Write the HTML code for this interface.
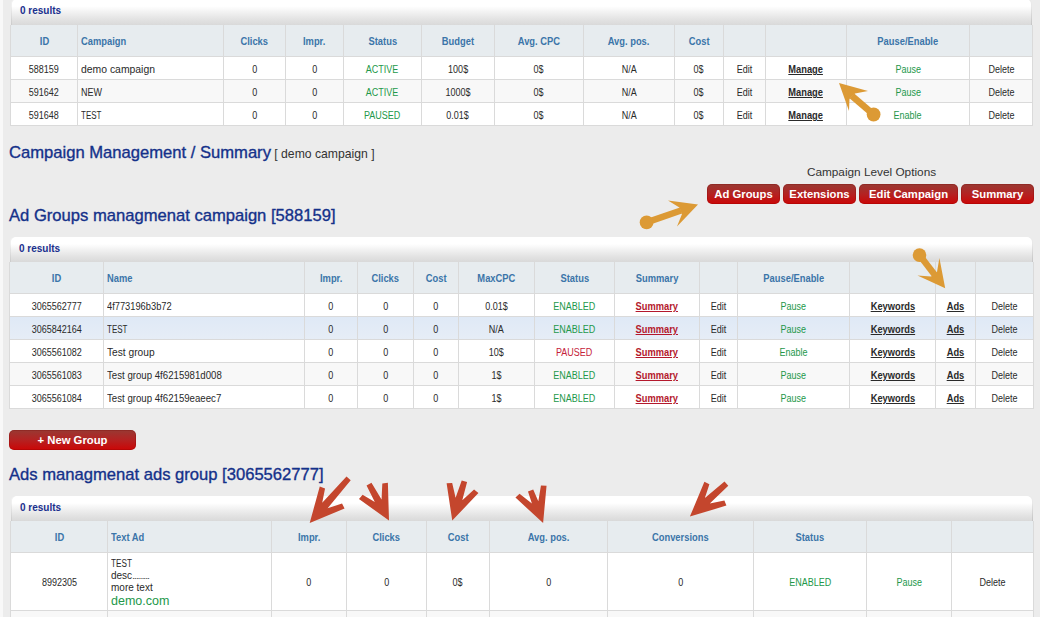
<!DOCTYPE html><html><head><meta charset="utf-8"><style>
html,body{margin:0;padding:0;} body{width:1040px;height:617px;overflow:hidden;position:relative;background:#ececec;font-family:"Liberation Sans", sans-serif;}
.t{position:absolute;white-space:nowrap;overflow:visible;}
.btn{position:absolute;height:20px;line-height:20px;border-radius:5px;color:#fff;font-weight:bold;font-size:11.3px;text-align:center;background:linear-gradient(#983933 0%,#b42222 50%,#cc0606 100%);box-shadow:inset 0 0 0 1px rgba(120,0,0,0.25);}
</style></head><body>
<div style="position:absolute;left:0px;top:0px;width:3px;height:617px;background:#f8f8f8;"></div>
<div style="position:absolute;left:11px;top:-1px;width:1021px;height:26px;background:linear-gradient(#ffffff 0%,#ffffff 28%,#f1f1f1 52%,#e3e3e3 78%,#d9d9d9 100%);border-radius:5px 5px 0 0;box-shadow:inset 1px 0 0 rgba(0,0,0,0.06),inset -1px 0 0 rgba(0,0,0,0.09);"></div>
<div class="t" style="left:20px;top:-2px;width:200px;height:26px;line-height:26px;text-align:left;font-weight:bold;font-size:10px;color:#1a2f8e;">0 results</div>
<div style="position:absolute;left:10px;top:25px;width:1023px;height:101px;background:#dadada;"></div>
<div style="position:absolute;left:11px;top:25px;width:1021px;height:31px;background:#e7ecef;"></div>
<div style="position:absolute;left:11px;top:57px;width:1021px;height:22px;background:#fff;"></div>
<div style="position:absolute;left:11px;top:80px;width:1021px;height:22px;background:#f8f8f8;"></div>
<div style="position:absolute;left:11px;top:103px;width:1021px;height:22px;background:#fff;"></div>
<div style="position:absolute;left:77px;top:25px;width:1px;height:100px;background:#dadada;"></div>
<div style="position:absolute;left:223px;top:25px;width:1px;height:100px;background:#dadada;"></div>
<div style="position:absolute;left:285px;top:25px;width:1px;height:100px;background:#dadada;"></div>
<div style="position:absolute;left:343px;top:25px;width:1px;height:100px;background:#dadada;"></div>
<div style="position:absolute;left:421px;top:25px;width:1px;height:100px;background:#dadada;"></div>
<div style="position:absolute;left:494px;top:25px;width:1px;height:100px;background:#dadada;"></div>
<div style="position:absolute;left:583px;top:25px;width:1px;height:100px;background:#dadada;"></div>
<div style="position:absolute;left:674px;top:25px;width:1px;height:100px;background:#dadada;"></div>
<div style="position:absolute;left:723px;top:25px;width:1px;height:100px;background:#dadada;"></div>
<div style="position:absolute;left:765px;top:25px;width:1px;height:100px;background:#dadada;"></div>
<div style="position:absolute;left:846px;top:25px;width:1px;height:100px;background:#dadada;"></div>
<div style="position:absolute;left:969px;top:25px;width:1px;height:100px;background:#dadada;"></div>
<div class="t" style="left:11px;top:26px;width:66px;height:31px;line-height:31px;text-align:center;font-weight:bold;font-size:11px;color:#3b75a9;"><span style="display:inline-block;transform:scaleX(0.85);transform-origin:center;">ID</span></div>
<div class="t" style="left:81px;top:26px;width:142px;height:31px;line-height:31px;text-align:left;font-weight:bold;font-size:11px;color:#3b75a9;"><span style="display:inline-block;transform:scaleX(0.85);transform-origin:left;">Campaign</span></div>
<div class="t" style="left:224px;top:26px;width:61px;height:31px;line-height:31px;text-align:center;font-weight:bold;font-size:11px;color:#3b75a9;"><span style="display:inline-block;transform:scaleX(0.85);transform-origin:center;">Clicks</span></div>
<div class="t" style="left:286px;top:26px;width:57px;height:31px;line-height:31px;text-align:center;font-weight:bold;font-size:11px;color:#3b75a9;"><span style="display:inline-block;transform:scaleX(0.85);transform-origin:center;">Impr.</span></div>
<div class="t" style="left:344px;top:26px;width:77px;height:31px;line-height:31px;text-align:center;font-weight:bold;font-size:11px;color:#3b75a9;"><span style="display:inline-block;transform:scaleX(0.85);transform-origin:center;">Status</span></div>
<div class="t" style="left:422px;top:26px;width:72px;height:31px;line-height:31px;text-align:center;font-weight:bold;font-size:11px;color:#3b75a9;"><span style="display:inline-block;transform:scaleX(0.85);transform-origin:center;">Budget</span></div>
<div class="t" style="left:495px;top:26px;width:88px;height:31px;line-height:31px;text-align:center;font-weight:bold;font-size:11px;color:#3b75a9;"><span style="display:inline-block;transform:scaleX(0.85);transform-origin:center;">Avg. CPC</span></div>
<div class="t" style="left:584px;top:26px;width:90px;height:31px;line-height:31px;text-align:center;font-weight:bold;font-size:11px;color:#3b75a9;"><span style="display:inline-block;transform:scaleX(0.85);transform-origin:center;">Avg. pos.</span></div>
<div class="t" style="left:675px;top:26px;width:48px;height:31px;line-height:31px;text-align:center;font-weight:bold;font-size:11px;color:#3b75a9;"><span style="display:inline-block;transform:scaleX(0.85);transform-origin:center;">Cost</span></div>
<div class="t" style="left:847px;top:26px;width:122px;height:31px;line-height:31px;text-align:center;font-weight:bold;font-size:11px;color:#3b75a9;"><span style="display:inline-block;transform:scaleX(0.85);transform-origin:center;">Pause/Enable</span></div>
<div class="t" style="left:11px;top:59px;width:66px;height:22px;line-height:22px;text-align:center;font-size:10px;color:#2a2a2a;"><span style="display:inline-block;transform:scaleX(0.9);transform-origin:center;">588159</span></div>
<div class="t" style="left:81px;top:59px;width:142px;height:22px;line-height:22px;text-align:left;font-size:10px;color:#2a2a2a;/*sx=1.04*/"><span style="display:inline-block;transform:scaleX(1.04);transform-origin:left;">demo campaign</span></div>
<div class="t" style="left:224px;top:59px;width:61px;height:22px;line-height:22px;text-align:center;font-size:10px;color:#2a2a2a;"><span style="display:inline-block;transform:scaleX(0.9);transform-origin:center;">0</span></div>
<div class="t" style="left:286px;top:59px;width:57px;height:22px;line-height:22px;text-align:center;font-size:10px;color:#2a2a2a;"><span style="display:inline-block;transform:scaleX(0.9);transform-origin:center;">0</span></div>
<div class="t" style="left:344px;top:59px;width:77px;height:22px;line-height:22px;text-align:center;font-size:10px;color:#2a2a2a;color:#23984a;"><span style="display:inline-block;transform:scaleX(0.9);transform-origin:center;">ACTIVE</span></div>
<div class="t" style="left:422px;top:59px;width:72px;height:22px;line-height:22px;text-align:center;font-size:10px;color:#2a2a2a;"><span style="display:inline-block;transform:scaleX(0.9);transform-origin:center;">100$</span></div>
<div class="t" style="left:495px;top:59px;width:88px;height:22px;line-height:22px;text-align:center;font-size:10px;color:#2a2a2a;"><span style="display:inline-block;transform:scaleX(0.9);transform-origin:center;">0$</span></div>
<div class="t" style="left:584px;top:59px;width:90px;height:22px;line-height:22px;text-align:center;font-size:10px;color:#2a2a2a;"><span style="display:inline-block;transform:scaleX(0.9);transform-origin:center;">N/A</span></div>
<div class="t" style="left:675px;top:59px;width:48px;height:22px;line-height:22px;text-align:center;font-size:10px;color:#2a2a2a;"><span style="display:inline-block;transform:scaleX(0.9);transform-origin:center;">0$</span></div>
<div class="t" style="left:724px;top:59px;width:41px;height:22px;line-height:22px;text-align:center;font-size:10px;color:#2a2a2a;"><span style="display:inline-block;transform:scaleX(0.9);transform-origin:center;">Edit</span></div>
<div class="t" style="left:766px;top:59px;width:80px;height:22px;line-height:22px;text-align:center;font-size:10px;color:#2a2a2a;font-weight:bold;text-decoration:underline;font-size:10px;"><span style="display:inline-block;transform:scaleX(0.93);transform-origin:center;text-decoration:underline;">Manage</span></div>
<div class="t" style="left:847px;top:59px;width:122px;height:22px;line-height:22px;text-align:center;font-size:10px;color:#2a2a2a;color:#23984a;"><span style="display:inline-block;transform:scaleX(0.9);transform-origin:center;">Pause</span></div>
<div class="t" style="left:970px;top:59px;width:62px;height:22px;line-height:22px;text-align:center;font-size:10px;color:#2a2a2a;"><span style="display:inline-block;transform:scaleX(0.9);transform-origin:center;">Delete</span></div>
<div class="t" style="left:11px;top:82px;width:66px;height:22px;line-height:22px;text-align:center;font-size:10px;color:#2a2a2a;"><span style="display:inline-block;transform:scaleX(0.9);transform-origin:center;">591642</span></div>
<div class="t" style="left:81px;top:82px;width:142px;height:22px;line-height:22px;text-align:left;font-size:10px;color:#2a2a2a;/*sx=0.9*/"><span style="display:inline-block;transform:scaleX(0.9);transform-origin:left;">NEW</span></div>
<div class="t" style="left:224px;top:82px;width:61px;height:22px;line-height:22px;text-align:center;font-size:10px;color:#2a2a2a;"><span style="display:inline-block;transform:scaleX(0.9);transform-origin:center;">0</span></div>
<div class="t" style="left:286px;top:82px;width:57px;height:22px;line-height:22px;text-align:center;font-size:10px;color:#2a2a2a;"><span style="display:inline-block;transform:scaleX(0.9);transform-origin:center;">0</span></div>
<div class="t" style="left:344px;top:82px;width:77px;height:22px;line-height:22px;text-align:center;font-size:10px;color:#2a2a2a;color:#23984a;"><span style="display:inline-block;transform:scaleX(0.9);transform-origin:center;">ACTIVE</span></div>
<div class="t" style="left:422px;top:82px;width:72px;height:22px;line-height:22px;text-align:center;font-size:10px;color:#2a2a2a;"><span style="display:inline-block;transform:scaleX(0.9);transform-origin:center;">1000$</span></div>
<div class="t" style="left:495px;top:82px;width:88px;height:22px;line-height:22px;text-align:center;font-size:10px;color:#2a2a2a;"><span style="display:inline-block;transform:scaleX(0.9);transform-origin:center;">0$</span></div>
<div class="t" style="left:584px;top:82px;width:90px;height:22px;line-height:22px;text-align:center;font-size:10px;color:#2a2a2a;"><span style="display:inline-block;transform:scaleX(0.9);transform-origin:center;">N/A</span></div>
<div class="t" style="left:675px;top:82px;width:48px;height:22px;line-height:22px;text-align:center;font-size:10px;color:#2a2a2a;"><span style="display:inline-block;transform:scaleX(0.9);transform-origin:center;">0$</span></div>
<div class="t" style="left:724px;top:82px;width:41px;height:22px;line-height:22px;text-align:center;font-size:10px;color:#2a2a2a;"><span style="display:inline-block;transform:scaleX(0.9);transform-origin:center;">Edit</span></div>
<div class="t" style="left:766px;top:82px;width:80px;height:22px;line-height:22px;text-align:center;font-size:10px;color:#2a2a2a;font-weight:bold;text-decoration:underline;font-size:10px;"><span style="display:inline-block;transform:scaleX(0.93);transform-origin:center;text-decoration:underline;">Manage</span></div>
<div class="t" style="left:847px;top:82px;width:122px;height:22px;line-height:22px;text-align:center;font-size:10px;color:#2a2a2a;color:#23984a;"><span style="display:inline-block;transform:scaleX(0.9);transform-origin:center;">Pause</span></div>
<div class="t" style="left:970px;top:82px;width:62px;height:22px;line-height:22px;text-align:center;font-size:10px;color:#2a2a2a;"><span style="display:inline-block;transform:scaleX(0.9);transform-origin:center;">Delete</span></div>
<div class="t" style="left:11px;top:105px;width:66px;height:22px;line-height:22px;text-align:center;font-size:10px;color:#2a2a2a;"><span style="display:inline-block;transform:scaleX(0.9);transform-origin:center;">591648</span></div>
<div class="t" style="left:81px;top:105px;width:142px;height:22px;line-height:22px;text-align:left;font-size:10px;color:#2a2a2a;/*sx=0.8*/"><span style="display:inline-block;transform:scaleX(0.8);transform-origin:left;">TEST</span></div>
<div class="t" style="left:224px;top:105px;width:61px;height:22px;line-height:22px;text-align:center;font-size:10px;color:#2a2a2a;"><span style="display:inline-block;transform:scaleX(0.9);transform-origin:center;">0</span></div>
<div class="t" style="left:286px;top:105px;width:57px;height:22px;line-height:22px;text-align:center;font-size:10px;color:#2a2a2a;"><span style="display:inline-block;transform:scaleX(0.9);transform-origin:center;">0</span></div>
<div class="t" style="left:344px;top:105px;width:77px;height:22px;line-height:22px;text-align:center;font-size:10px;color:#2a2a2a;color:#23984a;"><span style="display:inline-block;transform:scaleX(0.9);transform-origin:center;">PAUSED</span></div>
<div class="t" style="left:422px;top:105px;width:72px;height:22px;line-height:22px;text-align:center;font-size:10px;color:#2a2a2a;"><span style="display:inline-block;transform:scaleX(0.9);transform-origin:center;">0.01$</span></div>
<div class="t" style="left:495px;top:105px;width:88px;height:22px;line-height:22px;text-align:center;font-size:10px;color:#2a2a2a;"><span style="display:inline-block;transform:scaleX(0.9);transform-origin:center;">0$</span></div>
<div class="t" style="left:584px;top:105px;width:90px;height:22px;line-height:22px;text-align:center;font-size:10px;color:#2a2a2a;"><span style="display:inline-block;transform:scaleX(0.9);transform-origin:center;">N/A</span></div>
<div class="t" style="left:675px;top:105px;width:48px;height:22px;line-height:22px;text-align:center;font-size:10px;color:#2a2a2a;"><span style="display:inline-block;transform:scaleX(0.9);transform-origin:center;">0$</span></div>
<div class="t" style="left:724px;top:105px;width:41px;height:22px;line-height:22px;text-align:center;font-size:10px;color:#2a2a2a;"><span style="display:inline-block;transform:scaleX(0.9);transform-origin:center;">Edit</span></div>
<div class="t" style="left:766px;top:105px;width:80px;height:22px;line-height:22px;text-align:center;font-size:10px;color:#2a2a2a;font-weight:bold;text-decoration:underline;font-size:10px;"><span style="display:inline-block;transform:scaleX(0.93);transform-origin:center;text-decoration:underline;">Manage</span></div>
<div class="t" style="left:847px;top:105px;width:122px;height:22px;line-height:22px;text-align:center;font-size:10px;color:#2a2a2a;color:#23984a;"><span style="display:inline-block;transform:scaleX(0.9);transform-origin:center;">Enable</span></div>
<div class="t" style="left:970px;top:105px;width:62px;height:22px;line-height:22px;text-align:center;font-size:10px;color:#2a2a2a;"><span style="display:inline-block;transform:scaleX(0.9);transform-origin:center;">Delete</span></div>
<div class="t" style="left:9px;top:143px;width:400px;height:20px;line-height:20px;text-align:left;"><span style="font-size:16.6px;color:#14318a;-webkit-text-stroke:0.35px #14318a;">Campaign Management / Summary</span><span style="font-size:12.2px;color:#333;"> [ demo campaign ]</span></div>
<div class="t" style="left:760px;top:164px;width:223px;height:16px;line-height:16px;text-align:center;font-size:11.8px;color:#333;">Campaign Level Options</div>
<div class="btn" style="left:707px;top:184px;width:73px;">Ad Groups</div>
<div class="btn" style="left:783px;top:184px;width:73px;">Extensions</div>
<div class="btn" style="left:859px;top:184px;width:99px;">Edit Campaign</div>
<div class="btn" style="left:961px;top:184px;width:73px;">Summary</div>
<div class="t" style="left:9px;top:206px;width:400px;height:20px;line-height:20px;text-align:left;font-size:16.6px;color:#14318a;-webkit-text-stroke:0.35px #14318a;">Ad Groups managmenat campaign [588159]</div>
<div style="position:absolute;left:10px;top:237px;width:1023px;height:25px;background:linear-gradient(#ffffff 0%,#ffffff 28%,#f1f1f1 52%,#e3e3e3 78%,#d9d9d9 100%);border-radius:5px 5px 0 0;box-shadow:inset 1px 0 0 rgba(0,0,0,0.06),inset -1px 0 0 rgba(0,0,0,0.09);"></div>
<div class="t" style="left:19px;top:236px;width:200px;height:25px;line-height:25px;text-align:left;font-weight:bold;font-size:10px;color:#1a2f8e;">0 results</div>
<div style="position:absolute;left:9px;top:262px;width:1025px;height:147px;background:#dadada;"></div>
<div style="position:absolute;left:10px;top:262px;width:1023px;height:31px;background:#e7ecef;"></div>
<div style="position:absolute;left:10px;top:294px;width:1023px;height:22px;background:#fff;"></div>
<div style="position:absolute;left:10px;top:317px;width:1023px;height:22px;background:linear-gradient(#dfe9f6,#e6edf6);"></div>
<div style="position:absolute;left:10px;top:340px;width:1023px;height:22px;background:#fff;"></div>
<div style="position:absolute;left:10px;top:363px;width:1023px;height:22px;background:#f8f8f8;"></div>
<div style="position:absolute;left:10px;top:386px;width:1023px;height:22px;background:#fff;"></div>
<div style="position:absolute;left:103px;top:262px;width:1px;height:146px;background:#dadada;"></div>
<div style="position:absolute;left:304px;top:262px;width:1px;height:146px;background:#dadada;"></div>
<div style="position:absolute;left:357px;top:262px;width:1px;height:146px;background:#dadada;"></div>
<div style="position:absolute;left:413px;top:262px;width:1px;height:146px;background:#dadada;"></div>
<div style="position:absolute;left:458px;top:262px;width:1px;height:146px;background:#dadada;"></div>
<div style="position:absolute;left:534px;top:262px;width:1px;height:146px;background:#dadada;"></div>
<div style="position:absolute;left:614px;top:262px;width:1px;height:146px;background:#dadada;"></div>
<div style="position:absolute;left:699px;top:262px;width:1px;height:146px;background:#dadada;"></div>
<div style="position:absolute;left:737px;top:262px;width:1px;height:146px;background:#dadada;"></div>
<div style="position:absolute;left:849px;top:262px;width:1px;height:146px;background:#dadada;"></div>
<div style="position:absolute;left:935px;top:262px;width:1px;height:146px;background:#dadada;"></div>
<div style="position:absolute;left:975px;top:262px;width:1px;height:146px;background:#dadada;"></div>
<div class="t" style="left:10px;top:263px;width:93px;height:31px;line-height:31px;text-align:center;font-weight:bold;font-size:11px;color:#3b75a9;"><span style="display:inline-block;transform:scaleX(0.85);transform-origin:center;">ID</span></div>
<div class="t" style="left:107px;top:263px;width:197px;height:31px;line-height:31px;text-align:left;font-weight:bold;font-size:11px;color:#3b75a9;"><span style="display:inline-block;transform:scaleX(0.85);transform-origin:left;">Name</span></div>
<div class="t" style="left:305px;top:263px;width:52px;height:31px;line-height:31px;text-align:center;font-weight:bold;font-size:11px;color:#3b75a9;"><span style="display:inline-block;transform:scaleX(0.85);transform-origin:center;">Impr.</span></div>
<div class="t" style="left:358px;top:263px;width:55px;height:31px;line-height:31px;text-align:center;font-weight:bold;font-size:11px;color:#3b75a9;"><span style="display:inline-block;transform:scaleX(0.85);transform-origin:center;">Clicks</span></div>
<div class="t" style="left:414px;top:263px;width:44px;height:31px;line-height:31px;text-align:center;font-weight:bold;font-size:11px;color:#3b75a9;"><span style="display:inline-block;transform:scaleX(0.85);transform-origin:center;">Cost</span></div>
<div class="t" style="left:459px;top:263px;width:75px;height:31px;line-height:31px;text-align:center;font-weight:bold;font-size:11px;color:#3b75a9;"><span style="display:inline-block;transform:scaleX(0.85);transform-origin:center;">MaxCPC</span></div>
<div class="t" style="left:535px;top:263px;width:79px;height:31px;line-height:31px;text-align:center;font-weight:bold;font-size:11px;color:#3b75a9;"><span style="display:inline-block;transform:scaleX(0.85);transform-origin:center;">Status</span></div>
<div class="t" style="left:615px;top:263px;width:84px;height:31px;line-height:31px;text-align:center;font-weight:bold;font-size:11px;color:#3b75a9;"><span style="display:inline-block;transform:scaleX(0.85);transform-origin:center;">Summary</span></div>
<div class="t" style="left:738px;top:263px;width:111px;height:31px;line-height:31px;text-align:center;font-weight:bold;font-size:11px;color:#3b75a9;"><span style="display:inline-block;transform:scaleX(0.85);transform-origin:center;">Pause/Enable</span></div>
<div class="t" style="left:10px;top:296px;width:93px;height:22px;line-height:22px;text-align:center;font-size:10px;color:#2a2a2a;"><span style="display:inline-block;transform:scaleX(0.9);transform-origin:center;">3065562777</span></div>
<div class="t" style="left:107px;top:296px;width:197px;height:22px;line-height:22px;text-align:left;font-size:10px;color:#2a2a2a;/*sx=0.93*/"><span style="display:inline-block;transform:scaleX(0.93);transform-origin:left;">4f773196b3b72</span></div>
<div class="t" style="left:305px;top:296px;width:52px;height:22px;line-height:22px;text-align:center;font-size:10px;color:#2a2a2a;"><span style="display:inline-block;transform:scaleX(0.9);transform-origin:center;">0</span></div>
<div class="t" style="left:358px;top:296px;width:55px;height:22px;line-height:22px;text-align:center;font-size:10px;color:#2a2a2a;"><span style="display:inline-block;transform:scaleX(0.9);transform-origin:center;">0</span></div>
<div class="t" style="left:414px;top:296px;width:44px;height:22px;line-height:22px;text-align:center;font-size:10px;color:#2a2a2a;"><span style="display:inline-block;transform:scaleX(0.9);transform-origin:center;">0</span></div>
<div class="t" style="left:459px;top:296px;width:75px;height:22px;line-height:22px;text-align:center;font-size:10px;color:#2a2a2a;"><span style="display:inline-block;transform:scaleX(0.9);transform-origin:center;">0.01$</span></div>
<div class="t" style="left:535px;top:296px;width:79px;height:22px;line-height:22px;text-align:center;font-size:10px;color:#2a2a2a;color:#23984a;"><span style="display:inline-block;transform:scaleX(0.9);transform-origin:center;">ENABLED</span></div>
<div class="t" style="left:615px;top:296px;width:84px;height:22px;line-height:22px;text-align:center;font-size:10px;color:#2a2a2a;font-weight:bold;text-decoration:underline;font-size:10px;color:#b4182c;"><span style="display:inline-block;transform:scaleX(0.93);transform-origin:center;text-decoration:underline;">Summary</span></div>
<div class="t" style="left:700px;top:296px;width:37px;height:22px;line-height:22px;text-align:center;font-size:10px;color:#2a2a2a;"><span style="display:inline-block;transform:scaleX(0.9);transform-origin:center;">Edit</span></div>
<div class="t" style="left:738px;top:296px;width:111px;height:22px;line-height:22px;text-align:center;font-size:10px;color:#2a2a2a;color:#23984a;"><span style="display:inline-block;transform:scaleX(0.9);transform-origin:center;">Pause</span></div>
<div class="t" style="left:850px;top:296px;width:85px;height:22px;line-height:22px;text-align:center;font-size:10px;color:#2a2a2a;font-weight:bold;text-decoration:underline;font-size:10px;"><span style="display:inline-block;transform:scaleX(0.93);transform-origin:center;text-decoration:underline;">Keywords</span></div>
<div class="t" style="left:936px;top:296px;width:39px;height:22px;line-height:22px;text-align:center;font-size:10px;color:#2a2a2a;font-weight:bold;text-decoration:underline;font-size:10px;"><span style="display:inline-block;transform:scaleX(0.93);transform-origin:center;text-decoration:underline;">Ads</span></div>
<div class="t" style="left:976px;top:296px;width:57px;height:22px;line-height:22px;text-align:center;font-size:10px;color:#2a2a2a;"><span style="display:inline-block;transform:scaleX(0.9);transform-origin:center;">Delete</span></div>
<div class="t" style="left:10px;top:319px;width:93px;height:22px;line-height:22px;text-align:center;font-size:10px;color:#2a2a2a;"><span style="display:inline-block;transform:scaleX(0.9);transform-origin:center;">3065842164</span></div>
<div class="t" style="left:107px;top:319px;width:197px;height:22px;line-height:22px;text-align:left;font-size:10px;color:#2a2a2a;/*sx=0.8*/"><span style="display:inline-block;transform:scaleX(0.8);transform-origin:left;">TEST</span></div>
<div class="t" style="left:305px;top:319px;width:52px;height:22px;line-height:22px;text-align:center;font-size:10px;color:#2a2a2a;"><span style="display:inline-block;transform:scaleX(0.9);transform-origin:center;">0</span></div>
<div class="t" style="left:358px;top:319px;width:55px;height:22px;line-height:22px;text-align:center;font-size:10px;color:#2a2a2a;"><span style="display:inline-block;transform:scaleX(0.9);transform-origin:center;">0</span></div>
<div class="t" style="left:414px;top:319px;width:44px;height:22px;line-height:22px;text-align:center;font-size:10px;color:#2a2a2a;"><span style="display:inline-block;transform:scaleX(0.9);transform-origin:center;">0</span></div>
<div class="t" style="left:459px;top:319px;width:75px;height:22px;line-height:22px;text-align:center;font-size:10px;color:#2a2a2a;"><span style="display:inline-block;transform:scaleX(0.9);transform-origin:center;">N/A</span></div>
<div class="t" style="left:535px;top:319px;width:79px;height:22px;line-height:22px;text-align:center;font-size:10px;color:#2a2a2a;color:#23984a;"><span style="display:inline-block;transform:scaleX(0.9);transform-origin:center;">ENABLED</span></div>
<div class="t" style="left:615px;top:319px;width:84px;height:22px;line-height:22px;text-align:center;font-size:10px;color:#2a2a2a;font-weight:bold;text-decoration:underline;font-size:10px;color:#b4182c;"><span style="display:inline-block;transform:scaleX(0.93);transform-origin:center;text-decoration:underline;">Summary</span></div>
<div class="t" style="left:700px;top:319px;width:37px;height:22px;line-height:22px;text-align:center;font-size:10px;color:#2a2a2a;"><span style="display:inline-block;transform:scaleX(0.9);transform-origin:center;">Edit</span></div>
<div class="t" style="left:738px;top:319px;width:111px;height:22px;line-height:22px;text-align:center;font-size:10px;color:#2a2a2a;color:#23984a;"><span style="display:inline-block;transform:scaleX(0.9);transform-origin:center;">Pause</span></div>
<div class="t" style="left:850px;top:319px;width:85px;height:22px;line-height:22px;text-align:center;font-size:10px;color:#2a2a2a;font-weight:bold;text-decoration:underline;font-size:10px;"><span style="display:inline-block;transform:scaleX(0.93);transform-origin:center;text-decoration:underline;">Keywords</span></div>
<div class="t" style="left:936px;top:319px;width:39px;height:22px;line-height:22px;text-align:center;font-size:10px;color:#2a2a2a;font-weight:bold;text-decoration:underline;font-size:10px;"><span style="display:inline-block;transform:scaleX(0.93);transform-origin:center;text-decoration:underline;">Ads</span></div>
<div class="t" style="left:976px;top:319px;width:57px;height:22px;line-height:22px;text-align:center;font-size:10px;color:#2a2a2a;"><span style="display:inline-block;transform:scaleX(0.9);transform-origin:center;">Delete</span></div>
<div class="t" style="left:10px;top:342px;width:93px;height:22px;line-height:22px;text-align:center;font-size:10px;color:#2a2a2a;"><span style="display:inline-block;transform:scaleX(0.9);transform-origin:center;">3065561082</span></div>
<div class="t" style="left:107px;top:342px;width:197px;height:22px;line-height:22px;text-align:left;font-size:10px;color:#2a2a2a;/*sx=1.02*/"><span style="display:inline-block;transform:scaleX(1.02);transform-origin:left;">Test group</span></div>
<div class="t" style="left:305px;top:342px;width:52px;height:22px;line-height:22px;text-align:center;font-size:10px;color:#2a2a2a;"><span style="display:inline-block;transform:scaleX(0.9);transform-origin:center;">0</span></div>
<div class="t" style="left:358px;top:342px;width:55px;height:22px;line-height:22px;text-align:center;font-size:10px;color:#2a2a2a;"><span style="display:inline-block;transform:scaleX(0.9);transform-origin:center;">0</span></div>
<div class="t" style="left:414px;top:342px;width:44px;height:22px;line-height:22px;text-align:center;font-size:10px;color:#2a2a2a;"><span style="display:inline-block;transform:scaleX(0.9);transform-origin:center;">0</span></div>
<div class="t" style="left:459px;top:342px;width:75px;height:22px;line-height:22px;text-align:center;font-size:10px;color:#2a2a2a;"><span style="display:inline-block;transform:scaleX(0.9);transform-origin:center;">10$</span></div>
<div class="t" style="left:535px;top:342px;width:79px;height:22px;line-height:22px;text-align:center;font-size:10px;color:#2a2a2a;color:#c5223a;"><span style="display:inline-block;transform:scaleX(0.9);transform-origin:center;">PAUSED</span></div>
<div class="t" style="left:615px;top:342px;width:84px;height:22px;line-height:22px;text-align:center;font-size:10px;color:#2a2a2a;font-weight:bold;text-decoration:underline;font-size:10px;color:#b4182c;"><span style="display:inline-block;transform:scaleX(0.93);transform-origin:center;text-decoration:underline;">Summary</span></div>
<div class="t" style="left:700px;top:342px;width:37px;height:22px;line-height:22px;text-align:center;font-size:10px;color:#2a2a2a;"><span style="display:inline-block;transform:scaleX(0.9);transform-origin:center;">Edit</span></div>
<div class="t" style="left:738px;top:342px;width:111px;height:22px;line-height:22px;text-align:center;font-size:10px;color:#2a2a2a;color:#23984a;"><span style="display:inline-block;transform:scaleX(0.9);transform-origin:center;">Enable</span></div>
<div class="t" style="left:850px;top:342px;width:85px;height:22px;line-height:22px;text-align:center;font-size:10px;color:#2a2a2a;font-weight:bold;text-decoration:underline;font-size:10px;"><span style="display:inline-block;transform:scaleX(0.93);transform-origin:center;text-decoration:underline;">Keywords</span></div>
<div class="t" style="left:936px;top:342px;width:39px;height:22px;line-height:22px;text-align:center;font-size:10px;color:#2a2a2a;font-weight:bold;text-decoration:underline;font-size:10px;"><span style="display:inline-block;transform:scaleX(0.93);transform-origin:center;text-decoration:underline;">Ads</span></div>
<div class="t" style="left:976px;top:342px;width:57px;height:22px;line-height:22px;text-align:center;font-size:10px;color:#2a2a2a;"><span style="display:inline-block;transform:scaleX(0.9);transform-origin:center;">Delete</span></div>
<div class="t" style="left:10px;top:365px;width:93px;height:22px;line-height:22px;text-align:center;font-size:10px;color:#2a2a2a;"><span style="display:inline-block;transform:scaleX(0.9);transform-origin:center;">3065561083</span></div>
<div class="t" style="left:107px;top:365px;width:197px;height:22px;line-height:22px;text-align:left;font-size:10px;color:#2a2a2a;/*sx=0.965*/"><span style="display:inline-block;transform:scaleX(0.965);transform-origin:left;">Test group 4f6215981d008</span></div>
<div class="t" style="left:305px;top:365px;width:52px;height:22px;line-height:22px;text-align:center;font-size:10px;color:#2a2a2a;"><span style="display:inline-block;transform:scaleX(0.9);transform-origin:center;">0</span></div>
<div class="t" style="left:358px;top:365px;width:55px;height:22px;line-height:22px;text-align:center;font-size:10px;color:#2a2a2a;"><span style="display:inline-block;transform:scaleX(0.9);transform-origin:center;">0</span></div>
<div class="t" style="left:414px;top:365px;width:44px;height:22px;line-height:22px;text-align:center;font-size:10px;color:#2a2a2a;"><span style="display:inline-block;transform:scaleX(0.9);transform-origin:center;">0</span></div>
<div class="t" style="left:459px;top:365px;width:75px;height:22px;line-height:22px;text-align:center;font-size:10px;color:#2a2a2a;"><span style="display:inline-block;transform:scaleX(0.9);transform-origin:center;">1$</span></div>
<div class="t" style="left:535px;top:365px;width:79px;height:22px;line-height:22px;text-align:center;font-size:10px;color:#2a2a2a;color:#23984a;"><span style="display:inline-block;transform:scaleX(0.9);transform-origin:center;">ENABLED</span></div>
<div class="t" style="left:615px;top:365px;width:84px;height:22px;line-height:22px;text-align:center;font-size:10px;color:#2a2a2a;font-weight:bold;text-decoration:underline;font-size:10px;color:#b4182c;"><span style="display:inline-block;transform:scaleX(0.93);transform-origin:center;text-decoration:underline;">Summary</span></div>
<div class="t" style="left:700px;top:365px;width:37px;height:22px;line-height:22px;text-align:center;font-size:10px;color:#2a2a2a;"><span style="display:inline-block;transform:scaleX(0.9);transform-origin:center;">Edit</span></div>
<div class="t" style="left:738px;top:365px;width:111px;height:22px;line-height:22px;text-align:center;font-size:10px;color:#2a2a2a;color:#23984a;"><span style="display:inline-block;transform:scaleX(0.9);transform-origin:center;">Pause</span></div>
<div class="t" style="left:850px;top:365px;width:85px;height:22px;line-height:22px;text-align:center;font-size:10px;color:#2a2a2a;font-weight:bold;text-decoration:underline;font-size:10px;"><span style="display:inline-block;transform:scaleX(0.93);transform-origin:center;text-decoration:underline;">Keywords</span></div>
<div class="t" style="left:936px;top:365px;width:39px;height:22px;line-height:22px;text-align:center;font-size:10px;color:#2a2a2a;font-weight:bold;text-decoration:underline;font-size:10px;"><span style="display:inline-block;transform:scaleX(0.93);transform-origin:center;text-decoration:underline;">Ads</span></div>
<div class="t" style="left:976px;top:365px;width:57px;height:22px;line-height:22px;text-align:center;font-size:10px;color:#2a2a2a;"><span style="display:inline-block;transform:scaleX(0.9);transform-origin:center;">Delete</span></div>
<div class="t" style="left:10px;top:388px;width:93px;height:22px;line-height:22px;text-align:center;font-size:10px;color:#2a2a2a;"><span style="display:inline-block;transform:scaleX(0.9);transform-origin:center;">3065561084</span></div>
<div class="t" style="left:107px;top:388px;width:197px;height:22px;line-height:22px;text-align:left;font-size:10px;color:#2a2a2a;/*sx=0.965*/"><span style="display:inline-block;transform:scaleX(0.965);transform-origin:left;">Test group 4f62159eaeec7</span></div>
<div class="t" style="left:305px;top:388px;width:52px;height:22px;line-height:22px;text-align:center;font-size:10px;color:#2a2a2a;"><span style="display:inline-block;transform:scaleX(0.9);transform-origin:center;">0</span></div>
<div class="t" style="left:358px;top:388px;width:55px;height:22px;line-height:22px;text-align:center;font-size:10px;color:#2a2a2a;"><span style="display:inline-block;transform:scaleX(0.9);transform-origin:center;">0</span></div>
<div class="t" style="left:414px;top:388px;width:44px;height:22px;line-height:22px;text-align:center;font-size:10px;color:#2a2a2a;"><span style="display:inline-block;transform:scaleX(0.9);transform-origin:center;">0</span></div>
<div class="t" style="left:459px;top:388px;width:75px;height:22px;line-height:22px;text-align:center;font-size:10px;color:#2a2a2a;"><span style="display:inline-block;transform:scaleX(0.9);transform-origin:center;">1$</span></div>
<div class="t" style="left:535px;top:388px;width:79px;height:22px;line-height:22px;text-align:center;font-size:10px;color:#2a2a2a;color:#23984a;"><span style="display:inline-block;transform:scaleX(0.9);transform-origin:center;">ENABLED</span></div>
<div class="t" style="left:615px;top:388px;width:84px;height:22px;line-height:22px;text-align:center;font-size:10px;color:#2a2a2a;font-weight:bold;text-decoration:underline;font-size:10px;color:#b4182c;"><span style="display:inline-block;transform:scaleX(0.93);transform-origin:center;text-decoration:underline;">Summary</span></div>
<div class="t" style="left:700px;top:388px;width:37px;height:22px;line-height:22px;text-align:center;font-size:10px;color:#2a2a2a;"><span style="display:inline-block;transform:scaleX(0.9);transform-origin:center;">Edit</span></div>
<div class="t" style="left:738px;top:388px;width:111px;height:22px;line-height:22px;text-align:center;font-size:10px;color:#2a2a2a;color:#23984a;"><span style="display:inline-block;transform:scaleX(0.9);transform-origin:center;">Pause</span></div>
<div class="t" style="left:850px;top:388px;width:85px;height:22px;line-height:22px;text-align:center;font-size:10px;color:#2a2a2a;font-weight:bold;text-decoration:underline;font-size:10px;"><span style="display:inline-block;transform:scaleX(0.93);transform-origin:center;text-decoration:underline;">Keywords</span></div>
<div class="t" style="left:936px;top:388px;width:39px;height:22px;line-height:22px;text-align:center;font-size:10px;color:#2a2a2a;font-weight:bold;text-decoration:underline;font-size:10px;"><span style="display:inline-block;transform:scaleX(0.93);transform-origin:center;text-decoration:underline;">Ads</span></div>
<div class="t" style="left:976px;top:388px;width:57px;height:22px;line-height:22px;text-align:center;font-size:10px;color:#2a2a2a;"><span style="display:inline-block;transform:scaleX(0.9);transform-origin:center;">Delete</span></div>
<div class="btn" style="left:9px;top:430px;width:127px;">+ New Group</div>
<div class="t" style="left:9px;top:465px;width:400px;height:20px;line-height:20px;text-align:left;font-size:16.6px;color:#14318a;-webkit-text-stroke:0.35px #14318a;">Ads managmenat ads group [3065562777]</div>
<div style="position:absolute;left:11px;top:496px;width:1022px;height:25px;background:linear-gradient(#ffffff 0%,#ffffff 28%,#f1f1f1 52%,#e3e3e3 78%,#d9d9d9 100%);border-radius:5px 5px 0 0;box-shadow:inset 1px 0 0 rgba(0,0,0,0.06),inset -1px 0 0 rgba(0,0,0,0.09);"></div>
<div class="t" style="left:20px;top:495px;width:200px;height:25px;line-height:25px;text-align:left;font-weight:bold;font-size:10px;color:#1a2f8e;">0 results</div>
<div style="position:absolute;left:10px;top:521px;width:1024px;height:120px;background:#dadada;"></div>
<div style="position:absolute;left:11px;top:521px;width:1022px;height:31px;background:#e7ecef;"></div>
<div style="position:absolute;left:11px;top:553px;width:1022px;height:57px;background:#fff;"></div>
<div style="position:absolute;left:11px;top:611px;width:1022px;height:29px;background:#f8f8f8;"></div>
<div style="position:absolute;left:107px;top:521px;width:1px;height:119px;background:#dadada;"></div>
<div style="position:absolute;left:271px;top:521px;width:1px;height:119px;background:#dadada;"></div>
<div style="position:absolute;left:346px;top:521px;width:1px;height:119px;background:#dadada;"></div>
<div style="position:absolute;left:426px;top:521px;width:1px;height:119px;background:#dadada;"></div>
<div style="position:absolute;left:489px;top:521px;width:1px;height:119px;background:#dadada;"></div>
<div style="position:absolute;left:607px;top:521px;width:1px;height:119px;background:#dadada;"></div>
<div style="position:absolute;left:753px;top:521px;width:1px;height:119px;background:#dadada;"></div>
<div style="position:absolute;left:866px;top:521px;width:1px;height:119px;background:#dadada;"></div>
<div style="position:absolute;left:951px;top:521px;width:1px;height:119px;background:#dadada;"></div>
<div class="t" style="left:11px;top:522px;width:96px;height:31px;line-height:31px;text-align:center;font-weight:bold;font-size:11px;color:#3b75a9;"><span style="display:inline-block;transform:scaleX(0.85);transform-origin:center;">ID</span></div>
<div class="t" style="left:111px;top:522px;width:160px;height:31px;line-height:31px;text-align:left;font-weight:bold;font-size:11px;color:#3b75a9;"><span style="display:inline-block;transform:scaleX(0.85);transform-origin:left;">Text Ad</span></div>
<div class="t" style="left:272px;top:522px;width:74px;height:31px;line-height:31px;text-align:center;font-weight:bold;font-size:11px;color:#3b75a9;"><span style="display:inline-block;transform:scaleX(0.85);transform-origin:center;">Impr.</span></div>
<div class="t" style="left:347px;top:522px;width:79px;height:31px;line-height:31px;text-align:center;font-weight:bold;font-size:11px;color:#3b75a9;"><span style="display:inline-block;transform:scaleX(0.85);transform-origin:center;">Clicks</span></div>
<div class="t" style="left:427px;top:522px;width:62px;height:31px;line-height:31px;text-align:center;font-weight:bold;font-size:11px;color:#3b75a9;"><span style="display:inline-block;transform:scaleX(0.85);transform-origin:center;">Cost</span></div>
<div class="t" style="left:490px;top:522px;width:117px;height:31px;line-height:31px;text-align:center;font-weight:bold;font-size:11px;color:#3b75a9;"><span style="display:inline-block;transform:scaleX(0.85);transform-origin:center;">Avg. pos.</span></div>
<div class="t" style="left:608px;top:522px;width:145px;height:31px;line-height:31px;text-align:center;font-weight:bold;font-size:11px;color:#3b75a9;"><span style="display:inline-block;transform:scaleX(0.85);transform-origin:center;">Conversions</span></div>
<div class="t" style="left:754px;top:522px;width:112px;height:31px;line-height:31px;text-align:center;font-weight:bold;font-size:11px;color:#3b75a9;"><span style="display:inline-block;transform:scaleX(0.85);transform-origin:center;">Status</span></div>
<div class="t" style="left:11px;top:554px;width:96px;height:57px;line-height:57px;text-align:center;font-size:10px;color:#2a2a2a;"><span style="display:inline-block;transform:scaleX(0.9);transform-origin:center;">8992305</span></div>
<div class="t" style="left:111px;top:554px;width:160px;height:57px;line-height:57px;text-align:left;font-size:10px;color:#2a2a2a;line-height:12px;"><span style="display:inline-block;transform:scaleX(1.0);transform-origin:left;"><div style="line-height:12px;padding-top:3.5px;"><span style="display:inline-block;transform:scaleX(0.82);transform-origin:left;">TEST</span><br>desc<span style="letter-spacing:-0.6px;font-size:9px;">.........</span><br>more text<br><span style="font-size:12.5px;color:#23984a;line-height:14px;">demo.com</span></div></span></div>
<div class="t" style="left:272px;top:554px;width:74px;height:57px;line-height:57px;text-align:center;font-size:10px;color:#2a2a2a;"><span style="display:inline-block;transform:scaleX(0.9);transform-origin:center;">0</span></div>
<div class="t" style="left:347px;top:554px;width:79px;height:57px;line-height:57px;text-align:center;font-size:10px;color:#2a2a2a;"><span style="display:inline-block;transform:scaleX(0.9);transform-origin:center;">0</span></div>
<div class="t" style="left:427px;top:554px;width:62px;height:57px;line-height:57px;text-align:center;font-size:10px;color:#2a2a2a;"><span style="display:inline-block;transform:scaleX(0.9);transform-origin:center;">0$</span></div>
<div class="t" style="left:490px;top:554px;width:117px;height:57px;line-height:57px;text-align:center;font-size:10px;color:#2a2a2a;"><span style="display:inline-block;transform:scaleX(0.9);transform-origin:center;">0</span></div>
<div class="t" style="left:608px;top:554px;width:145px;height:57px;line-height:57px;text-align:center;font-size:10px;color:#2a2a2a;"><span style="display:inline-block;transform:scaleX(0.9);transform-origin:center;">0</span></div>
<div class="t" style="left:754px;top:554px;width:112px;height:57px;line-height:57px;text-align:center;font-size:10px;color:#2a2a2a;color:#23984a;"><span style="display:inline-block;transform:scaleX(0.9);transform-origin:center;">ENABLED</span></div>
<div class="t" style="left:867px;top:554px;width:84px;height:57px;line-height:57px;text-align:center;font-size:10px;color:#2a2a2a;color:#23984a;"><span style="display:inline-block;transform:scaleX(0.9);transform-origin:center;">Pause</span></div>
<div class="t" style="left:952px;top:554px;width:81px;height:57px;line-height:57px;text-align:center;font-size:10px;color:#2a2a2a;"><span style="display:inline-block;transform:scaleX(0.9);transform-origin:center;">Delete</span></div>
<svg style="position:absolute;left:0;top:0;" width="1040" height="617" viewBox="0 0 1040 617">
<g fill="#dc9a35"><polygon points="839,83 868,91 855,93.5 849.5,99 849,111"/><line x1="852" y1="96" x2="873.6" y2="114.5" stroke="#dc9a35" stroke-width="6.8"/><circle cx="873.6" cy="114.5" r="6.9"/></g>
<g fill="#dc9a35"><polygon points="698,204.6 668,200.4 679.4,207.4 681.9,214.3 677,226.5"/><line x1="646.6" y1="222.4" x2="681" y2="210.5" stroke="#dc9a35" stroke-width="6.5"/><circle cx="646.6" cy="222.4" r="6.9"/></g>
<g fill="#dc9a35"><polygon points="945.2,288.2 939.4,258 937,272 931.1,276.5 917.5,275.5"/><line x1="919.5" y1="255.1" x2="936" y2="276.5" stroke="#dc9a35" stroke-width="6.5"/><circle cx="919.5" cy="255.1" r="6.8"/></g>
<polygon fill="#c4462d" points="309.70,523.00 319.76,486.56 325.04,488.44 322.23,502.78 346.49,476.46 350.71,480.14 327.64,508.24 342.04,503.50 344.56,508.50"/>
<polygon fill="#c4462d" points="389.00,520.60 387.88,482.81 382.32,483.39 381.56,499.54 371.46,482.75 366.54,485.45 374.81,502.10 362.61,494.66 358.99,498.94"/>
<polygon fill="#c4462d" points="452.25,520.60 446.61,483.31 452.19,482.89 455.60,497.70 461.72,480.42 467.08,482.08 462.30,500.15 474.08,489.48 478.42,493.02"/>
<polygon fill="#c4462d" points="543.10,523.10 546.55,485.65 540.95,485.55 538.31,501.13 533.21,489.59 527.99,491.61 531.90,503.49 519.55,493.69 515.45,497.51"/>
<polygon fill="#c4462d" points="689.90,516.60 704.40,481.83 709.40,484.37 704.86,498.10 724.52,481.52 728.28,485.68 709.77,503.61 724.40,500.39 726.40,505.61"/>
</svg>
</body></html>
